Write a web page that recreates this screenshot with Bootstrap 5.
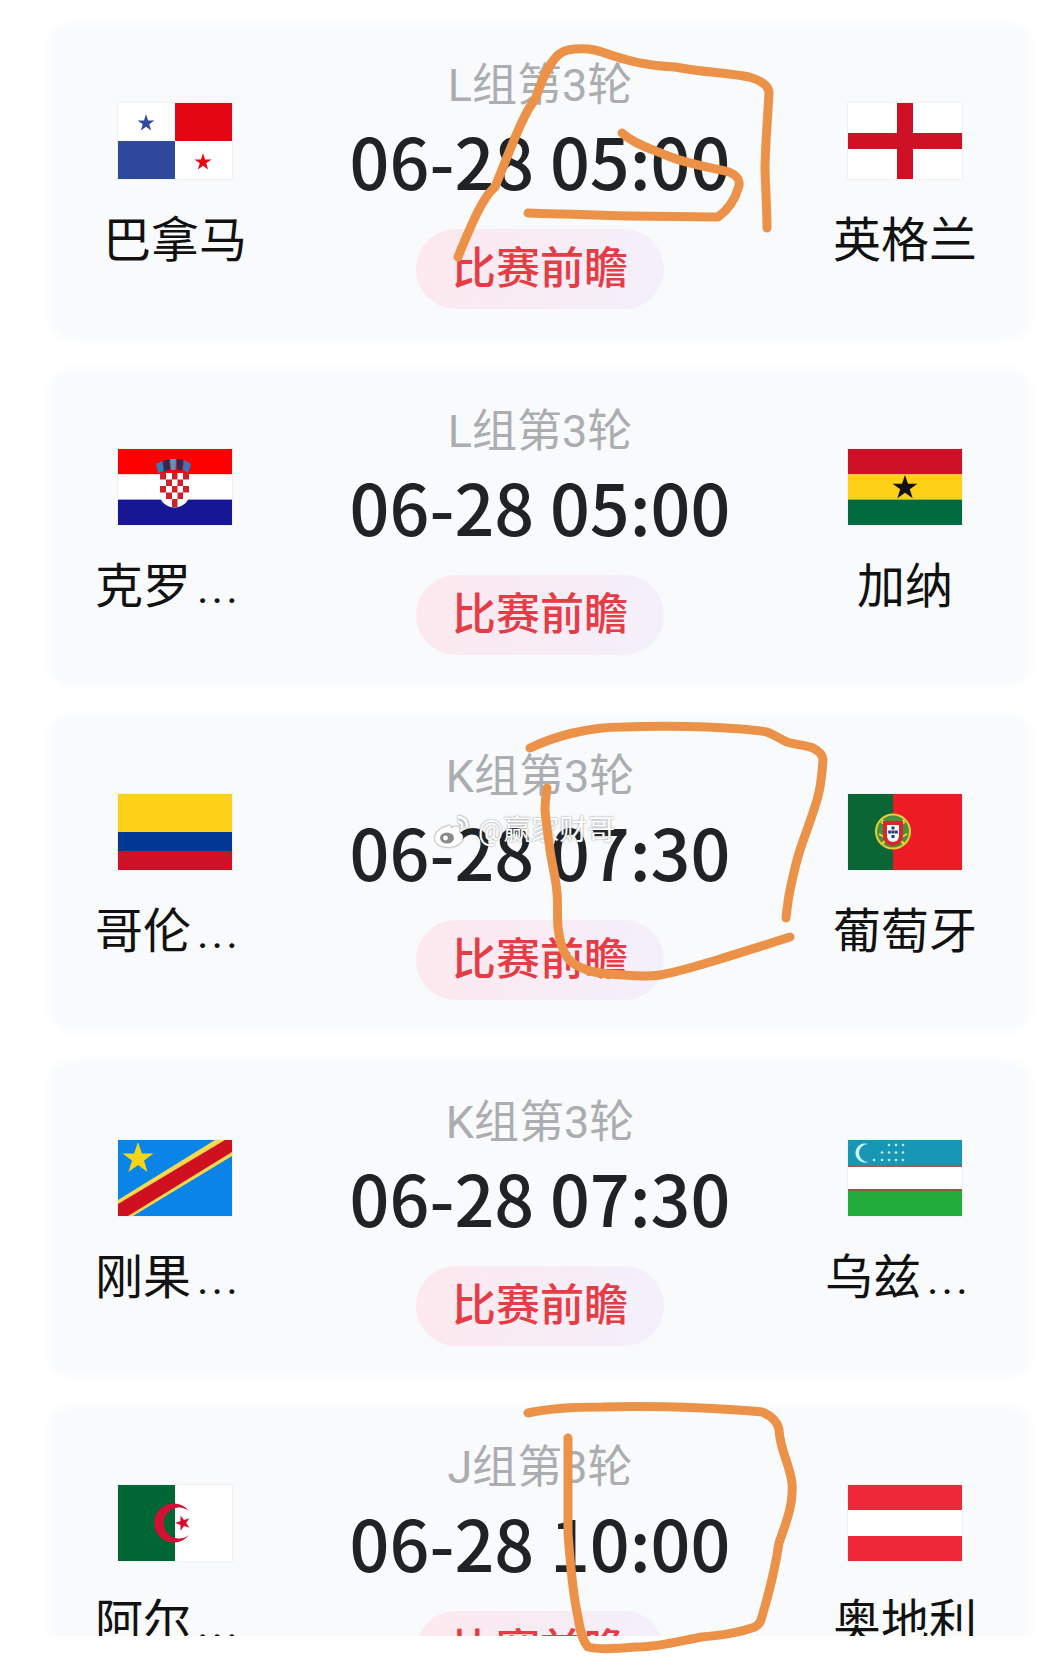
<!DOCTYPE html>
<html lang="zh-CN">
<head>
<meta charset="utf-8">
<title>赛程</title>
<link href="https://cdn.jsdelivr.net/npm/bootstrap@5.3.0/dist/css/bootstrap.min.css" rel="stylesheet">
<style>
body{background:#fff;margin:0;font-family:Roboto,"Noto Sans CJK SC",sans-serif;}
.stage{width:1048px;height:1659px;position:relative;overflow:hidden;}
.fixture-list{height:1636px;overflow:hidden;padding:20px 14px 0 46px;gap:22.5px;}
.fixture{flex:0 0 323px;height:323px;background:#f8fafc;border-radius:24px;padding:0 49px 0 49px;box-shadow:inset 0 0 12px 3px #fff;}
.side{width:160px;flex:0 0 160px;padding-top:83px;}
.flag{width:114px;height:76px;display:block;box-shadow:0 0 0 1px rgba(0,0,0,.035);}
.team-name{width:160px;font-size:48px;line-height:64px;margin-top:30px;color:#111;white-space:nowrap;}
.team-name.short{text-align:center;}
.team-dots{letter-spacing:3px;margin-left:6px;font-size:44px;}
.mid{padding-top:38px;}
.grp{font-size:45px;line-height:56px;color:#abadb1;}
.clock{font-family:"Noto Sans CJK SC",Roboto,sans-serif;font-size:70px;line-height:84px;font-weight:500;color:#202326;margin-top:4px;white-space:nowrap;}
.preview{width:248px;height:80px;margin-top:27px;font-size:44px;font-weight:500;color:#e63c46;background:linear-gradient(100deg,#fde8ee,#f3f0fb);}
.ink{position:absolute;left:0;top:0;width:1048px;height:1659px;pointer-events:none;}
.ink path.st{fill:none;stroke:#ec9248;stroke-width:9;stroke-linecap:round;stroke-linejoin:round;}
.wm{position:absolute;left:433px;top:811px;height:40px;color:#fff;font-size:28px;line-height:40px;text-shadow:0 0 2px rgba(70,70,70,.7);}
.wm svg{width:38px;height:33px;margin-right:7px;filter:drop-shadow(0 0 1px rgba(70,70,70,.8));}
</style>
</head>
<body>
<div class="stage">
<div class="fixture-list d-flex flex-column">

<div class="fixture d-flex justify-content-between">
  <div class="side d-flex flex-column align-items-center">
    <svg class="flag" viewBox="0 0 114 76"><rect width="114" height="76" fill="#fff"/><rect x="57" width="57" height="38" fill="#e30613"/><rect y="38" width="57" height="38" fill="#2f4a9c"/><polygon points="28,11 30,17.500 36.500,17.500 31.200,21.300 33.200,27.500 28,23.700 22.800,27.500 24.800,21.300 19.500,17.500 26,17.500" fill="#2f4a9c"/><polygon points="85,50 87,56.500 93.500,56.500 88.200,60.300 90.200,66.500 85,62.700 79.800,66.500 81.800,60.300 76.500,56.500 83,56.500" fill="#e30613"/></svg>
    <div class="team-name short">巴拿马</div>
  </div>
  <div class="mid d-flex flex-column align-items-center">
    <div class="grp">L组第3轮</div>
    <div class="clock">06-28 05:00</div>
    <div class="preview rounded-pill d-flex align-items-center justify-content-center">比赛前瞻</div>
  </div>
  <div class="side d-flex flex-column align-items-center">
    <svg class="flag" viewBox="0 0 114 76"><rect width="114" height="76" fill="#fff"/><rect x="49" width="16" height="76" fill="#ce1124"/><rect y="30" width="114" height="16" fill="#ce1124"/></svg>
    <div class="team-name short">英格兰</div>
  </div>
</div>

<div class="fixture d-flex justify-content-between">
  <div class="side d-flex flex-column align-items-center">
    <svg class="flag" viewBox="0 0 114 76"><rect width="114" height="25.400" fill="#f00"/><rect y="25.400" width="114" height="25.400" fill="#fff"/><rect y="50.600" width="114" height="25.400" fill="#171796"/><g><path d="M38 15l6-3 2 10-6 2z" fill="#3f78b8"/><path d="M45 12l6-2 1 11-6 1z" fill="#22305f"/><path d="M52 10h6l-.5 11H53z" fill="#4f9cc0"/><path d="M59 10l6 1-1 10-5-.5z" fill="#22305f"/><path d="M66 11l7 4-3 9-5-3z" fill="#3f78b8"/></g><path d="M42 24h29v22a14.500 12.500 0 0 1-29 0z" fill="#fff"/><g fill="#d0202a"><rect x="42" y="24" width="6" height="6.500"/><rect x="54" y="24" width="5.500" height="6.500"/><rect x="65" y="24" width="6" height="6.500"/><rect x="48" y="30.500" width="6" height="6.500"/><rect x="59.500" y="30.500" width="5.500" height="6.500"/><rect x="42" y="37" width="6" height="6.500"/><rect x="54" y="37" width="5.500" height="6.500"/><rect x="65" y="37" width="6" height="6.500"/><rect x="48" y="43.500" width="6" height="6.500"/><rect x="59.500" y="43.500" width="5.500" height="6.500"/><rect x="54" y="50" width="5.500" height="8"/></g></svg>
    <div class="team-name">克罗<span class="team-dots">...</span></div>
  </div>
  <div class="mid d-flex flex-column align-items-center">
    <div class="grp">L组第3轮</div>
    <div class="clock">06-28 05:00</div>
    <div class="preview rounded-pill d-flex align-items-center justify-content-center">比赛前瞻</div>
  </div>
  <div class="side d-flex flex-column align-items-center">
    <svg class="flag" viewBox="0 0 114 76"><rect width="114" height="25.400" fill="#ce1126"/><rect y="25.400" width="114" height="25.400" fill="#fcd116"/><rect y="50.600" width="114" height="25.400" fill="#006b3f"/><polygon points="57,26 60,34.800 69.400,34.800 61.800,40.300 64.700,49.200 57,43.700 49.300,49.200 52.200,40.300 44.600,34.800 54,34.800" fill="#111"/></svg>
    <div class="team-name short">加纳</div>
  </div>
</div>

<div class="fixture d-flex justify-content-between">
  <div class="side d-flex flex-column align-items-center">
    <svg class="flag" viewBox="0 0 114 76"><rect width="114" height="38" fill="#fcd116"/><rect y="38" width="114" height="19" fill="#003893"/><rect y="57" width="114" height="19" fill="#ce1126"/></svg>
    <div class="team-name">哥伦<span class="team-dots">...</span></div>
  </div>
  <div class="mid d-flex flex-column align-items-center">
    <div class="grp">K组第3轮</div>
    <div class="clock">06-28 07:30</div>
    <div class="preview rounded-pill d-flex align-items-center justify-content-center">比赛前瞻</div>
  </div>
  <div class="side d-flex flex-column align-items-center">
    <svg class="flag" viewBox="0 0 114 76"><rect width="46" height="76" fill="#0b6635"/><rect x="45" width="69" height="76" fill="#ed1c24"/><circle cx="45" cy="37.500" r="18" fill="#e3cf3a"/><circle cx="45" cy="37.500" r="16" fill="#4b8f3a"/><path d="M33 28q12 8 24 0M31 40q14 9 28 0M34 50l22-24M56 50L34 26" fill="none" stroke="#efd83a" stroke-width="2"/><path d="M35 27h20v15a10 10 0 0 1-20 0z" fill="#d9262c"/><path d="M39 31h12v11a6 6 0 0 1-12 0z" fill="#fff"/><g fill="#1b3a8a"><rect x="43.500" y="32.500" width="3" height="3"/><rect x="40.200" y="36.500" width="3" height="3"/><rect x="43.500" y="36.500" width="3" height="3"/><rect x="46.800" y="36.500" width="3" height="3"/><rect x="43.500" y="41" width="3" height="3"/></g></svg>
    <div class="team-name short">葡萄牙</div>
  </div>
</div>

<div class="fixture d-flex justify-content-between">
  <div class="side d-flex flex-column align-items-center">
    <svg class="flag" viewBox="0 0 114 76"><rect width="114" height="76" fill="#0a84e6"/><polygon points="0,60 97,0 114,0 114,16 15,76 0,76" fill="#f7d84f"/><polygon points="0,64 107,0 114,0 114,12 10,76 0,76" fill="#ce1021"/><polygon points="20,2 24,13.500 35.500,13.500 26,20.500 29.500,32 20,25 10.500,32 14,20.500 4.500,13.500 16,13.500" fill="#f7d618"/></svg>
    <div class="team-name">刚果<span class="team-dots">...</span></div>
  </div>
  <div class="mid d-flex flex-column align-items-center">
    <div class="grp">K组第3轮</div>
    <div class="clock">06-28 07:30</div>
    <div class="preview rounded-pill d-flex align-items-center justify-content-center">比赛前瞻</div>
  </div>
  <div class="side d-flex flex-column align-items-center">
    <svg class="flag" viewBox="0 0 114 76"><rect width="114" height="25" fill="#1896b6"/><rect y="25" width="114" height="2" fill="#a35a5a"/><rect y="27" width="114" height="22" fill="#fff"/><rect y="49" width="114" height="2" fill="#8a5a44"/><rect y="51" width="114" height="25" fill="#22ad3c"/><path d="M20 4a9.500 9.500 0 1 0 0 18a7.800 7.800 0 1 1 0-18z" fill="#cff3f5"/><g fill="#bff0f4"><circle cx="41" cy="5" r="1.300"/><circle cx="48" cy="5" r="1.300"/><circle cx="55" cy="5" r="1.300"/><circle cx="34" cy="12.500" r="1.300"/><circle cx="41" cy="12.500" r="1.300"/><circle cx="48" cy="12.500" r="1.300"/><circle cx="55" cy="12.500" r="1.300"/><circle cx="26" cy="20" r="1.300"/><circle cx="34" cy="20" r="1.300"/><circle cx="41" cy="20" r="1.300"/><circle cx="48" cy="20" r="1.300"/><circle cx="55" cy="20" r="1.300"/></g></svg>
    <div class="team-name">乌兹<span class="team-dots">...</span></div>
  </div>
</div>

<div class="fixture d-flex justify-content-between">
  <div class="side d-flex flex-column align-items-center">
    <svg class="flag" viewBox="0 0 114 76"><rect width="114" height="76" fill="#fff"/><rect width="57" height="76" fill="#006633"/><path d="M71 26A19.500 19.500 0 1 0 71 50A15.500 15.500 0 1 1 71 26z" fill="#d21034"/><polygon points="0,-8 1.900,-2.600 7.600,-2.500 3,1 4.700,6.500 0,3.200 -4.700,6.500 -3,1 -7.600,-2.500 -1.900,-2.600" transform="translate(65 38) rotate(-18)" fill="#d21034"/></svg>
    <div class="team-name">阿尔<span class="team-dots">...</span></div>
  </div>
  <div class="mid d-flex flex-column align-items-center">
    <div class="grp">J组第3轮</div>
    <div class="clock">06-28 10:00</div>
    <div class="preview rounded-pill d-flex align-items-center justify-content-center">比赛前瞻</div>
  </div>
  <div class="side d-flex flex-column align-items-center">
    <svg class="flag" viewBox="0 0 114 76"><rect width="114" height="76" fill="#fff"/><rect width="114" height="25" fill="#ed2939"/><rect y="51" width="114" height="25" fill="#ed2939"/></svg>
    <div class="team-name short">奥地利</div>
  </div>
</div>

</div>

<div class="wm d-flex align-items-center">
  <svg viewBox="0 0 38 33"><path d="M15 11C7 13 2 18 2 23c0 6 6 9 13 9 9 0 15-5 15-10 0-3-3-4-4-5 1-3 0-6-5-5l-3 1c0-2-1-3-3-2z" fill="#fff"/><ellipse cx="14" cy="23" rx="7" ry="5.500" fill="#8a8a8a"/><circle cx="12.500" cy="23" r="2.400" fill="#fff"/><path d="M25 2c6 0 10 5 9 11M25 7c3 0 5 2 4 6" fill="none" stroke="#fff" stroke-width="2.500"/></svg>
  <span>@赢家财哥</span>
</div>

<svg class="ink" viewBox="0 0 1048 1659">
  <path class="st" d="M458 257C475 215 485 195 495 187C510 150 525 110 535 100C545 70 555 52 568 50C585 47 595 50 602 52C630 62 650 66 675 67C700 72 730 73 749 77C760 80 768 85 769 92C767 130 765 150 765 170C766 195 767 215 767 228"/>
  <path class="st" d="M622 133C635 145 655 150 668 156C690 165 715 168 729 172C738 176 740 180 739 186C735 200 728 210 718 217C690 216 640 217 595 215C570 214 545 214 528 213"/>
  <path class="st" d="M530 748C545 741 560 736 573 733C590 729 605 727 623 727C650 726 680 726 707 727C730 728 750 729 767 732C775 735 780 739 787 742C797 745 806 745 813 748C819 751 823 755 823 760C822 775 821 787 817 800C812 817 806 832 800 850C796 862 793 876 790 890C788 900 787 909 786 918"/>
  <path class="st" d="M790 937C765 945 740 953 717 960C697 966 678 972 660 975C648 977 635 976 623 975C610 974 597 974 587 970C578 967 571 963 567 957C561 948 559 938 558 927C557 915 558 904 557 893C556 878 552 865 550 850C548 835 546 822 545 810C545 802 546 795 547 788"/>
  <path class="st" d="M528 1413C550 1408 575 1407 602 1407C640 1406 675 1407 702 1408C725 1409 745 1410 762 1412C772 1416 778 1423 779 1430C780 1450 790 1465 792 1483C794 1505 785 1525 779 1543C775 1570 767 1600 761 1620C759 1625 757 1626 755 1627C735 1634 720 1635 702 1637C680 1641 655 1648 635 1647C615 1649 600 1650 588 1647C582 1640 580 1630 578 1617C572 1590 570 1560 568 1533C568 1500 568 1470 568 1438"/>
</svg>
</div>
</body>
</html>
